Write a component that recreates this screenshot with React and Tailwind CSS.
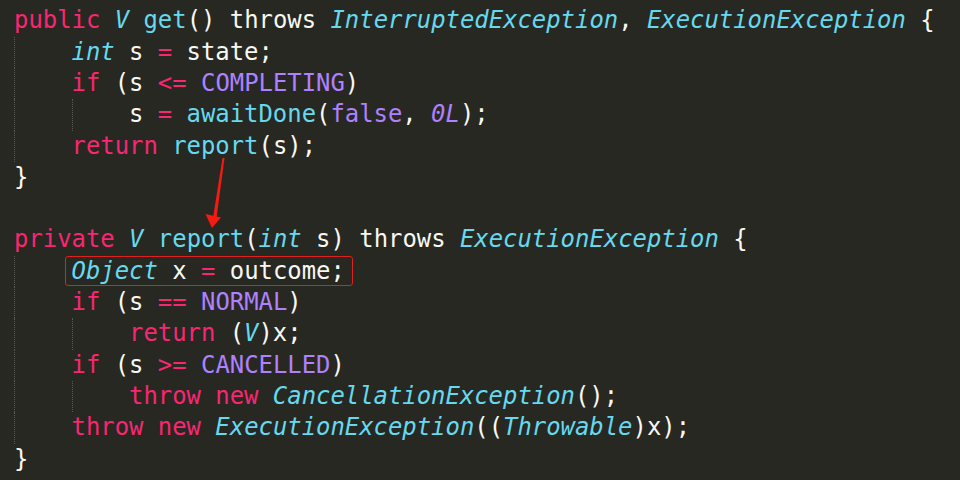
import React from 'react';

// Monokai-style palette
const K = ({ children }) => <span className="text-[#f92672]">{children}</span>;
const T = ({ children }) => <span className="text-[#66d9ef] italic">{children}</span>;
const F = ({ children }) => <span className="text-[#66d9ef]">{children}</span>;
const C = ({ children, italic }) => (
  <span className={italic ? 'text-[#ae81ff] italic' : 'text-[#ae81ff]'}>{children}</span>
);

const Indent = () => (
  <span className="inline-block h-full w-[57.5px] border-l border-dotted border-[#5a5a52] align-top" />
);

const Line = ({ depth = 0, children }) => (
  <div className="flex h-[31.3px] whitespace-pre">
    {depth > 0 && <Indent />}
    {depth > 1 && <Indent />}
    <span className="leading-[31.3px]">{children}</span>
  </div>
);

const Boxed = ({ children }) => (
  <span className="relative">
    <span className="absolute -left-[7px] -right-[8px] top-[-1px] bottom-[-1px] rounded-[3px] border border-[#e0201c]" />
    {children}
  </span>
);

const Arrow = () => (
  <svg className="absolute left-0 top-0 pointer-events-none" width="960" height="480">
    <polygon points="222.5,158 224.5,158 216.5,218 213,218" fill="#f51a12" />
    <polygon points="205.5,214 221,217.5 212,228" fill="#f51a12" />
  </svg>
);

export default function App() {
  return (
    <div
      className="relative w-[960px] h-[480px] overflow-hidden bg-[#272822] pt-[5.4px] pl-[14px] text-[#f8f8f2] text-[23.9px]"
      style={{ fontFamily: '"DejaVu Sans Mono", "Liberation Mono", monospace' }}
    >
      <Line>
        <K>public</K> <T>V</T> <F>get</F>() throws <T>InterruptedException</T>, <T>ExecutionException</T> {'{'}
      </Line>
      <Line depth={1}>
        <T>int</T> s <K>=</K> state;
      </Line>
      <Line depth={1}>
        <K>if</K> (s <K>&lt;=</K> <C>COMPLETING</C>)
      </Line>
      <Line depth={2}>
        s <K>=</K> <F>awaitDone</F>(<C>false</C>, <C italic>0L</C>);
      </Line>
      <Line depth={1}>
        <K>return</K> <F>report</F>(s);
      </Line>
      <Line>{'}'}</Line>
      <Line>{' '}</Line>
      <Line>
        <K>private</K> <T>V</T> <F>report</F>(<T>int</T> s) throws <T>ExecutionException</T> {'{'}
      </Line>
      <Line depth={1}>
        <Boxed>
          <T>Object</T> x <K>=</K> outcome;
        </Boxed>
      </Line>
      <Line depth={1}>
        <K>if</K> (s <K>==</K> <C>NORMAL</C>)
      </Line>
      <Line depth={2}>
        <K>return</K> (<T>V</T>)x;
      </Line>
      <Line depth={1}>
        <K>if</K> (s <K>&gt;=</K> <C>CANCELLED</C>)
      </Line>
      <Line depth={2}>
        <K>throw</K> <K>new</K> <T>CancellationException</T>();
      </Line>
      <Line depth={1}>
        <K>throw</K> <K>new</K> <T>ExecutionException</T>((<T>Throwable</T>)x);
      </Line>
      <Line>{'}'}</Line>
      <Arrow />
    </div>
  );
}
